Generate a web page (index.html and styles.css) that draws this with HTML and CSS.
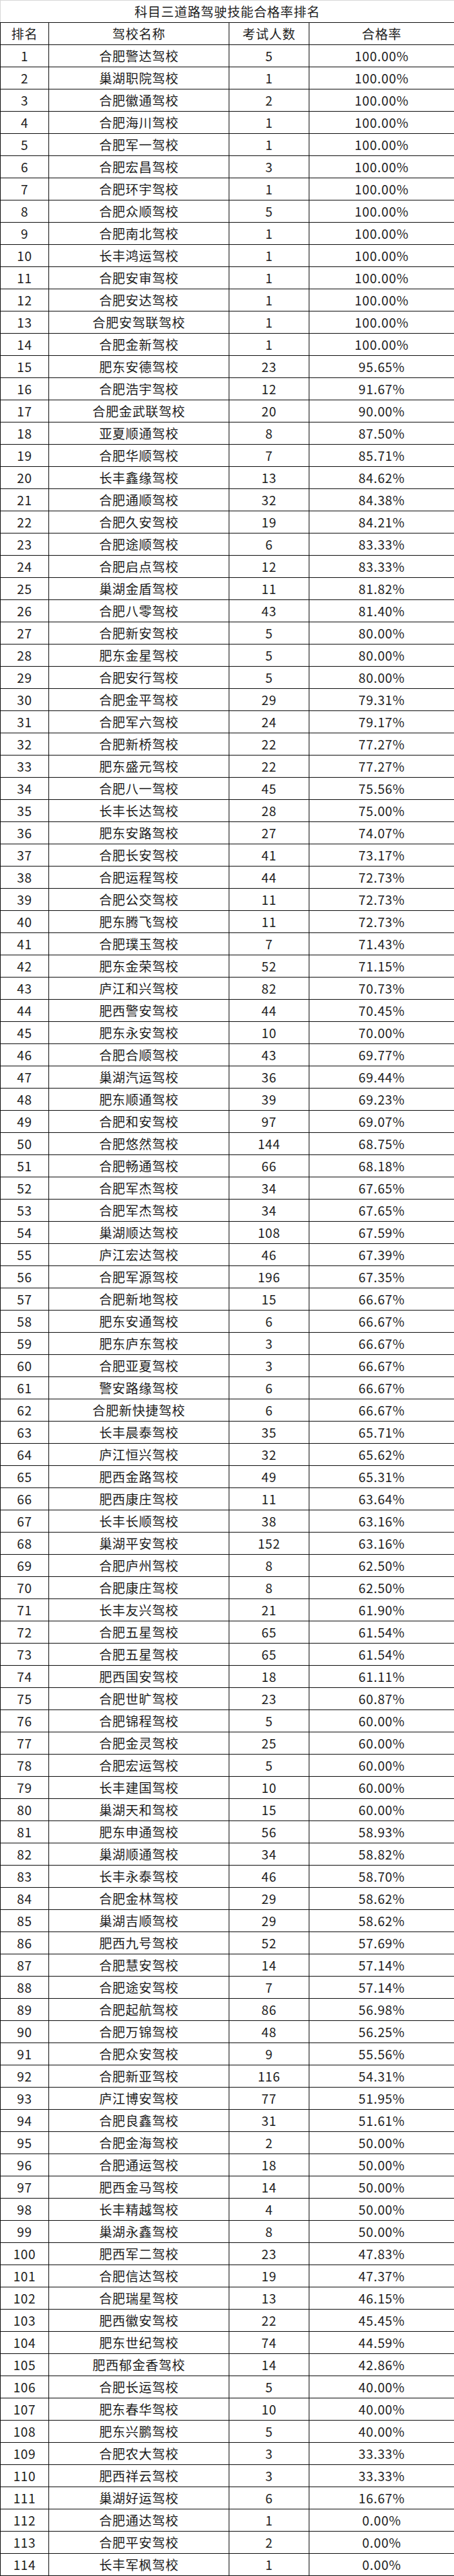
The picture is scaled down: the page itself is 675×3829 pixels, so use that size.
FILE: index.html
```html
<!DOCTYPE html>
<html lang="zh-CN">
<head>
<meta charset="utf-8">
<title>科目三道路驾驶技能合格率排名</title>
<link rel="stylesheet" href="styles.css">
</head>
<body>
<table class="rank-table">
<colgroup><col class="c-rank"><col class="c-name"><col class="c-count"><col class="c-rate"></colgroup>
<thead>
<tr><th class="title" colspan="4">科目三道路驾驶技能合格率排名</th></tr>
<tr class="head"><th>排名</th><th>驾校名称</th><th>考试人数</th><th>合格率</th></tr>
</thead>
<tbody>
<tr><td>1</td><td>合肥警达驾校</td><td>5</td><td>100.00%</td></tr>
<tr><td>2</td><td>巢湖职院驾校</td><td>1</td><td>100.00%</td></tr>
<tr><td>3</td><td>合肥徽通驾校</td><td>2</td><td>100.00%</td></tr>
<tr><td>4</td><td>合肥海川驾校</td><td>1</td><td>100.00%</td></tr>
<tr><td>5</td><td>合肥军一驾校</td><td>1</td><td>100.00%</td></tr>
<tr><td>6</td><td>合肥宏昌驾校</td><td>3</td><td>100.00%</td></tr>
<tr><td>7</td><td>合肥环宇驾校</td><td>1</td><td>100.00%</td></tr>
<tr><td>8</td><td>合肥众顺驾校</td><td>5</td><td>100.00%</td></tr>
<tr><td>9</td><td>合肥南北驾校</td><td>1</td><td>100.00%</td></tr>
<tr><td>10</td><td>长丰鸿运驾校</td><td>1</td><td>100.00%</td></tr>
<tr><td>11</td><td>合肥安审驾校</td><td>1</td><td>100.00%</td></tr>
<tr><td>12</td><td>合肥安达驾校</td><td>1</td><td>100.00%</td></tr>
<tr><td>13</td><td>合肥安驾联驾校</td><td>1</td><td>100.00%</td></tr>
<tr><td>14</td><td>合肥金新驾校</td><td>1</td><td>100.00%</td></tr>
<tr><td>15</td><td>肥东安德驾校</td><td>23</td><td>95.65%</td></tr>
<tr><td>16</td><td>合肥浩宇驾校</td><td>12</td><td>91.67%</td></tr>
<tr><td>17</td><td>合肥金武联驾校</td><td>20</td><td>90.00%</td></tr>
<tr><td>18</td><td>亚夏顺通驾校</td><td>8</td><td>87.50%</td></tr>
<tr><td>19</td><td>合肥华顺驾校</td><td>7</td><td>85.71%</td></tr>
<tr><td>20</td><td>长丰鑫缘驾校</td><td>13</td><td>84.62%</td></tr>
<tr><td>21</td><td>合肥通顺驾校</td><td>32</td><td>84.38%</td></tr>
<tr><td>22</td><td>合肥久安驾校</td><td>19</td><td>84.21%</td></tr>
<tr><td>23</td><td>合肥途顺驾校</td><td>6</td><td>83.33%</td></tr>
<tr><td>24</td><td>合肥启点驾校</td><td>12</td><td>83.33%</td></tr>
<tr><td>25</td><td>巢湖金盾驾校</td><td>11</td><td>81.82%</td></tr>
<tr><td>26</td><td>合肥八零驾校</td><td>43</td><td>81.40%</td></tr>
<tr><td>27</td><td>合肥新安驾校</td><td>5</td><td>80.00%</td></tr>
<tr><td>28</td><td>肥东金星驾校</td><td>5</td><td>80.00%</td></tr>
<tr><td>29</td><td>合肥安行驾校</td><td>5</td><td>80.00%</td></tr>
<tr><td>30</td><td>合肥金平驾校</td><td>29</td><td>79.31%</td></tr>
<tr><td>31</td><td>合肥军六驾校</td><td>24</td><td>79.17%</td></tr>
<tr><td>32</td><td>合肥新桥驾校</td><td>22</td><td>77.27%</td></tr>
<tr><td>33</td><td>肥东盛元驾校</td><td>22</td><td>77.27%</td></tr>
<tr><td>34</td><td>合肥八一驾校</td><td>45</td><td>75.56%</td></tr>
<tr><td>35</td><td>长丰长达驾校</td><td>28</td><td>75.00%</td></tr>
<tr><td>36</td><td>肥东安路驾校</td><td>27</td><td>74.07%</td></tr>
<tr><td>37</td><td>合肥长安驾校</td><td>41</td><td>73.17%</td></tr>
<tr><td>38</td><td>合肥运程驾校</td><td>44</td><td>72.73%</td></tr>
<tr><td>39</td><td>合肥公交驾校</td><td>11</td><td>72.73%</td></tr>
<tr><td>40</td><td>肥东腾飞驾校</td><td>11</td><td>72.73%</td></tr>
<tr><td>41</td><td>合肥璞玉驾校</td><td>7</td><td>71.43%</td></tr>
<tr><td>42</td><td>肥东金荣驾校</td><td>52</td><td>71.15%</td></tr>
<tr><td>43</td><td>庐江和兴驾校</td><td>82</td><td>70.73%</td></tr>
<tr><td>44</td><td>肥西警安驾校</td><td>44</td><td>70.45%</td></tr>
<tr><td>45</td><td>肥东永安驾校</td><td>10</td><td>70.00%</td></tr>
<tr><td>46</td><td>合肥合顺驾校</td><td>43</td><td>69.77%</td></tr>
<tr><td>47</td><td>巢湖汽运驾校</td><td>36</td><td>69.44%</td></tr>
<tr><td>48</td><td>肥东顺通驾校</td><td>39</td><td>69.23%</td></tr>
<tr><td>49</td><td>合肥和安驾校</td><td>97</td><td>69.07%</td></tr>
<tr><td>50</td><td>合肥悠然驾校</td><td>144</td><td>68.75%</td></tr>
<tr><td>51</td><td>合肥畅通驾校</td><td>66</td><td>68.18%</td></tr>
<tr><td>52</td><td>合肥军杰驾校</td><td>34</td><td>67.65%</td></tr>
<tr><td>53</td><td>合肥军杰驾校</td><td>34</td><td>67.65%</td></tr>
<tr><td>54</td><td>巢湖顺达驾校</td><td>108</td><td>67.59%</td></tr>
<tr><td>55</td><td>庐江宏达驾校</td><td>46</td><td>67.39%</td></tr>
<tr><td>56</td><td>合肥军源驾校</td><td>196</td><td>67.35%</td></tr>
<tr><td>57</td><td>合肥新地驾校</td><td>15</td><td>66.67%</td></tr>
<tr><td>58</td><td>肥东安通驾校</td><td>6</td><td>66.67%</td></tr>
<tr><td>59</td><td>肥东庐东驾校</td><td>3</td><td>66.67%</td></tr>
<tr><td>60</td><td>合肥亚夏驾校</td><td>3</td><td>66.67%</td></tr>
<tr><td>61</td><td>警安路缘驾校</td><td>6</td><td>66.67%</td></tr>
<tr><td>62</td><td>合肥新快捷驾校</td><td>6</td><td>66.67%</td></tr>
<tr><td>63</td><td>长丰晨泰驾校</td><td>35</td><td>65.71%</td></tr>
<tr><td>64</td><td>庐江恒兴驾校</td><td>32</td><td>65.62%</td></tr>
<tr><td>65</td><td>肥西金路驾校</td><td>49</td><td>65.31%</td></tr>
<tr><td>66</td><td>肥西康庄驾校</td><td>11</td><td>63.64%</td></tr>
<tr><td>67</td><td>长丰长顺驾校</td><td>38</td><td>63.16%</td></tr>
<tr><td>68</td><td>巢湖平安驾校</td><td>152</td><td>63.16%</td></tr>
<tr><td>69</td><td>合肥庐州驾校</td><td>8</td><td>62.50%</td></tr>
<tr><td>70</td><td>合肥康庄驾校</td><td>8</td><td>62.50%</td></tr>
<tr><td>71</td><td>长丰友兴驾校</td><td>21</td><td>61.90%</td></tr>
<tr><td>72</td><td>合肥五星驾校</td><td>65</td><td>61.54%</td></tr>
<tr><td>73</td><td>合肥五星驾校</td><td>65</td><td>61.54%</td></tr>
<tr><td>74</td><td>肥西国安驾校</td><td>18</td><td>61.11%</td></tr>
<tr><td>75</td><td>合肥世旷驾校</td><td>23</td><td>60.87%</td></tr>
<tr><td>76</td><td>合肥锦程驾校</td><td>5</td><td>60.00%</td></tr>
<tr><td>77</td><td>合肥金灵驾校</td><td>25</td><td>60.00%</td></tr>
<tr><td>78</td><td>合肥宏运驾校</td><td>5</td><td>60.00%</td></tr>
<tr><td>79</td><td>长丰建国驾校</td><td>10</td><td>60.00%</td></tr>
<tr><td>80</td><td>巢湖天和驾校</td><td>15</td><td>60.00%</td></tr>
<tr><td>81</td><td>肥东申通驾校</td><td>56</td><td>58.93%</td></tr>
<tr><td>82</td><td>巢湖顺通驾校</td><td>34</td><td>58.82%</td></tr>
<tr><td>83</td><td>长丰永泰驾校</td><td>46</td><td>58.70%</td></tr>
<tr><td>84</td><td>合肥金林驾校</td><td>29</td><td>58.62%</td></tr>
<tr><td>85</td><td>巢湖吉顺驾校</td><td>29</td><td>58.62%</td></tr>
<tr><td>86</td><td>肥西九号驾校</td><td>52</td><td>57.69%</td></tr>
<tr><td>87</td><td>合肥慧安驾校</td><td>14</td><td>57.14%</td></tr>
<tr><td>88</td><td>合肥途安驾校</td><td>7</td><td>57.14%</td></tr>
<tr><td>89</td><td>合肥起航驾校</td><td>86</td><td>56.98%</td></tr>
<tr><td>90</td><td>合肥万锦驾校</td><td>48</td><td>56.25%</td></tr>
<tr><td>91</td><td>合肥众安驾校</td><td>9</td><td>55.56%</td></tr>
<tr><td>92</td><td>合肥新亚驾校</td><td>116</td><td>54.31%</td></tr>
<tr><td>93</td><td>庐江博安驾校</td><td>77</td><td>51.95%</td></tr>
<tr><td>94</td><td>合肥良鑫驾校</td><td>31</td><td>51.61%</td></tr>
<tr><td>95</td><td>合肥金海驾校</td><td>2</td><td>50.00%</td></tr>
<tr><td>96</td><td>合肥通运驾校</td><td>18</td><td>50.00%</td></tr>
<tr><td>97</td><td>肥西金马驾校</td><td>14</td><td>50.00%</td></tr>
<tr><td>98</td><td>长丰精越驾校</td><td>4</td><td>50.00%</td></tr>
<tr><td>99</td><td>巢湖永鑫驾校</td><td>8</td><td>50.00%</td></tr>
<tr><td>100</td><td>肥西军二驾校</td><td>23</td><td>47.83%</td></tr>
<tr><td>101</td><td>合肥信达驾校</td><td>19</td><td>47.37%</td></tr>
<tr><td>102</td><td>合肥瑞星驾校</td><td>13</td><td>46.15%</td></tr>
<tr><td>103</td><td>肥西徽安驾校</td><td>22</td><td>45.45%</td></tr>
<tr><td>104</td><td>肥东世纪驾校</td><td>74</td><td>44.59%</td></tr>
<tr><td>105</td><td>肥西郁金香驾校</td><td>14</td><td>42.86%</td></tr>
<tr><td>106</td><td>合肥长运驾校</td><td>5</td><td>40.00%</td></tr>
<tr><td>107</td><td>肥东春华驾校</td><td>10</td><td>40.00%</td></tr>
<tr><td>108</td><td>肥东兴鹏驾校</td><td>5</td><td>40.00%</td></tr>
<tr><td>109</td><td>合肥农大驾校</td><td>3</td><td>33.33%</td></tr>
<tr><td>110</td><td>肥西祥云驾校</td><td>3</td><td>33.33%</td></tr>
<tr><td>111</td><td>巢湖好运驾校</td><td>6</td><td>16.67%</td></tr>
<tr><td>112</td><td>合肥通达驾校</td><td>1</td><td>0.00%</td></tr>
<tr><td>113</td><td>合肥平安驾校</td><td>2</td><td>0.00%</td></tr>
<tr><td>114</td><td>长丰军枫驾校</td><td>1</td><td>0.00%</td></tr>
</tbody>
</table>
</body>
</html>
```

FILE: styles.css
```css
html, body {
  margin: 0;
  padding: 0;
  background: #ffffff;
}

body {
  font-family: "Noto Sans CJK SC", "Noto Sans", sans-serif;
  color: #1c1c1c;
}

.rank-table {
  width: 675px;
  table-layout: fixed;
  border-collapse: collapse;
}

.c-rank { width: 72px; }
.c-name { width: 268px; }
.c-count { width: 119px; }
.c-rate { width: 216px; }

.rank-table th,
.rank-table td {
  height: 32px;
  padding: 0;
  border: 1px solid #111111;
  text-align: center;
  vertical-align: middle;
  font-size: 19px;
  font-weight: 400;
  line-height: 20px;
  letter-spacing: 0.7px;
  white-space: nowrap;
  overflow: hidden;
}

.rank-table th.title {
  border-left-color: #d8d8d8;
  border-top-color: #d8d8d8;
}
```
